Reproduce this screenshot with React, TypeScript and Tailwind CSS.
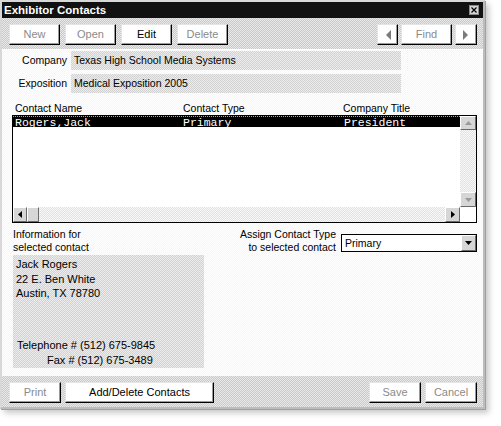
import React from "react";

const FONT = "font-['Liberation_Sans',Arial,sans-serif]";

function Btn({ label, w, enabled = false }: { label: string; w: string; enabled?: boolean }) {
  return (
    <div
      className={`${w} h-[21px] flex items-center justify-center bg-white border border-t-[#e4e4e4] border-l-[#e4e4e4] border-r-black border-b-black shadow-[inset_-1px_-1px_0_#9a9a9a] text-[11px] ${
        enabled ? "text-black" : "text-[#8a8a8a]"
      }`}
    >
      {label}
    </div>
  );
}

function ArrowBtn({ dir, w }: { dir: "l" | "r"; w: string }) {
  return (
    <div
      className={`${w} h-[21px] flex items-center justify-center bg-white border border-t-[#e4e4e4] border-l-[#e4e4e4] border-r-black border-b-black shadow-[inset_-1px_-1px_0_#9a9a9a]`}
    >
      <svg width="6" height="10" viewBox="0 0 6 10">
        {dir === "l" ? <polygon points="6,0 6,10 1,5" fill="#7a7a7a" /> : <polygon points="0,0 0,10 5,5" fill="#7a7a7a" />}
      </svg>
    </div>
  );
}

function SbBtn({ dir, dark }: { dir: "u" | "d" | "l" | "r"; dark?: boolean }) {
  const fill = dark ? "#000" : "#9a9a9a";
  const pts =
    dir === "u" ? "0,4 7,4 3.5,0" : dir === "d" ? "0,0 7,0 3.5,4" : dir === "l" ? "4,0 4,7 0,3.5" : "0,0 0,7 4,3.5";
  const vb = dir === "u" || dir === "d" ? "0 0 7 4" : "0 0 4 7";
  const wh = dir === "u" || dir === "d" ? { w: 7, h: 4 } : { w: 4, h: 7 };
  return (
    <div className="w-full h-full flex items-center justify-center bg-[#d6d6d6] border border-t-white border-l-white border-r-[#6a6a6a] border-b-[#6a6a6a]">
      <svg width={wh.w} height={wh.h} viewBox={vb}>
        <polygon points={pts} fill={fill} />
      </svg>
    </div>
  );
}

export default function App() {
  return (
    <div className={`w-[501px] h-[426px] bg-white ${FONT} text-black text-[10.5px] leading-[13px]`}>
      <div className="w-[485px] h-[409px] flex flex-col border-2 border-t-[#d8d8d8] border-l-[#d8d8d8] border-r-[#bcbcbc] border-b-[#bcbcbc] shadow-[1px_1px_0_#a0a0a0,4px_4px_6px_rgba(0,0,0,0.22)] bg-white">
        {/* Title bar */}
        <div className="h-[16px] bg-[#111111] flex items-center justify-between pl-[2px] pr-[4px]">
          <span className="text-white font-bold text-[11.5px] leading-[16px]">Exhibitor Contacts</span>
          <div className="w-[10px] h-[10px] bg-[#d4d4d4] border border-[#888] flex items-center justify-center">
            <svg width="6" height="6" viewBox="0 0 6 6">
              <path d="M0.5 0.5 L5.5 5.5 M5.5 0.5 L0.5 5.5" stroke="#000" strokeWidth="1.2" />
            </svg>
          </div>
        </div>

        {/* Toolbar */}
        <div className="h-[32px] flex items-start justify-between pt-[6px] pl-[7px] pr-[6px] bg-[image:conic-gradient(#c9c9c9_25%,#e9e9e9_0_50%,#c9c9c9_0_75%,#e9e9e9_0)] bg-[length:2px_2px] border-b border-white">
          <div className="flex gap-[5px]">
            <Btn label="New" w="w-[51px]" />
            <Btn label="Open" w="w-[51px]" />
            <Btn label="Edit" w="w-[51px]" enabled />
            <Btn label="Delete" w="w-[51px]" />
          </div>
          <div className="flex gap-[3px]">
            <ArrowBtn dir="l" w="w-[21px]" />
            <Btn label="Find" w="w-[51px]" />
            <ArrowBtn dir="r" w="w-[22px]" />
          </div>
        </div>

        {/* Content */}
        <div className="h-[326px] flex flex-col pl-[10px] pt-[1px] bg-[image:conic-gradient(#f6f6f6_25%,#ffffff_0_50%,#f6f6f6_0_75%,#ffffff_0)] bg-[length:2px_2px]">
          <div className="flex flex-col gap-[4px] -ml-[10px]">
            <div className="flex items-center gap-[4px]">
              <div className="w-[65px] text-right">Company</div>
              <div className="w-[330px] h-[19px] flex items-center pl-[3px] bg-[image:conic-gradient(#d2d2d2_25%,#ececec_0_50%,#d2d2d2_0_75%,#ececec_0)] bg-[length:2px_2px]">
                Texas High School Media Systems
              </div>
            </div>
            <div className="flex items-center gap-[4px]">
              <div className="w-[65px] text-right">Exposition</div>
              <div className="w-[330px] h-[19px] flex items-center pl-[3px] bg-[image:conic-gradient(#d2d2d2_25%,#ececec_0_50%,#d2d2d2_0_75%,#ececec_0)] bg-[length:2px_2px]">
                Medical Exposition 2005
              </div>
            </div>
          </div>

          {/* Headers */}
          <div className="mt-[8px] h-[14px] flex items-center pl-[3px]">
            <div className="w-[168px]">Contact Name</div>
            <div className="w-[160px]">Contact Type</div>
            <div>Company Title</div>
          </div>

          {/* List box */}
          <div className="w-[465px] h-[108px] border border-black flex flex-col bg-white">
            <div className="flex h-[91px]">
              <div className="w-[447px] h-full">
                <div className="h-[11px] bg-black text-white flex items-center pl-[2px] font-['Liberation_Mono',monospace] text-[11.5px] leading-[11px] border-t border-dotted border-[#aaa]">
                  <div className="w-[168px]">Rogers,Jack</div>
                  <div className="w-[161px]">Primary</div>
                  <div>President</div>
                </div>
              </div>
              <div className="w-[16px] h-full flex flex-col bg-[image:conic-gradient(#e2e2e2_25%,#f8f8f8_0_50%,#e2e2e2_0_75%,#f8f8f8_0)] bg-[length:2px_2px]">
                <div className="h-[14px]">
                  <SbBtn dir="u" />
                </div>
                <div className="flex-1" />
                <div className="h-[15px]">
                  <SbBtn dir="d" />
                </div>
              </div>
            </div>
            <div className="flex h-[15px]">
              <div className="w-[447px] h-full flex bg-[image:conic-gradient(#e2e2e2_25%,#f8f8f8_0_50%,#e2e2e2_0_75%,#f8f8f8_0)] bg-[length:2px_2px]">
                <div className="w-[14px] h-full">
                  <SbBtn dir="l" dark />
                </div>
                <div className="w-[12px] h-full bg-[#d6d6d6] border border-t-white border-l-white border-r-[#6a6a6a] border-b-[#6a6a6a]" />
                <div className="flex-1" />
                <div className="w-[15px] h-full">
                  <SbBtn dir="r" dark />
                </div>
              </div>
              <div className="w-[16px] h-full bg-white" />
            </div>
          </div>

          {/* Lower section */}
          <div className="mt-[5px] flex justify-between w-[465px]">
            <div className="flex flex-col pl-[1px]">
              <div className="leading-[13px]">Information for</div>
              <div className="leading-[13px]">selected contact</div>
              <div className="mt-[1px] w-[191px] h-[113px] flex flex-col pt-[2px] bg-[image:conic-gradient(#d2d2d2_25%,#ececec_0_50%,#d2d2d2_0_75%,#ececec_0)] bg-[length:2px_2px] leading-[14.5px] text-[11px]">
                <div className="pl-[3px]">Jack Rogers</div>
                <div className="pl-[3px]">22 E. Ben White</div>
                <div className="pl-[3px]">Austin, TX 78780</div>
                <div className="flex-1" />
                <div className="pl-[4px]">Telephone # (512) 675-9845</div>
                <div className="pl-[34px] mb-[1px]">Fax # (512) 675-3489</div>
              </div>
            </div>
            <div className="flex items-start gap-[5px]">
              <div className="text-right leading-[13px]">
                <div>Assign Contact Type</div>
                <div>to selected contact</div>
              </div>
              <div className="mt-[6px] w-[136px] h-[18px] border border-black bg-white flex items-center">
                <div className="flex-1 pl-[3px]">Primary</div>
                <div className="w-[15px] h-[16px]">
                  <SbBtn dir="d" dark />
                </div>
              </div>
            </div>
          </div>
        </div>

        {/* Bottom bar */}
        <div className="h-[31px] flex items-start justify-between pt-[6px] pl-[7px] pr-[6px] bg-[image:conic-gradient(#c9c9c9_25%,#e9e9e9_0_50%,#c9c9c9_0_75%,#e9e9e9_0)] bg-[length:2px_2px]">
          <div className="flex gap-[4px]">
            <Btn label="Print" w="w-[52px]" />
            <Btn label="Add/Delete Contacts" w="w-[149px]" enabled />
          </div>
          <div className="flex gap-[4px]">
            <Btn label="Save" w="w-[52px]" />
            <Btn label="Cancel" w="w-[52px]" />
          </div>
        </div>
      </div>
    </div>
  );
}
